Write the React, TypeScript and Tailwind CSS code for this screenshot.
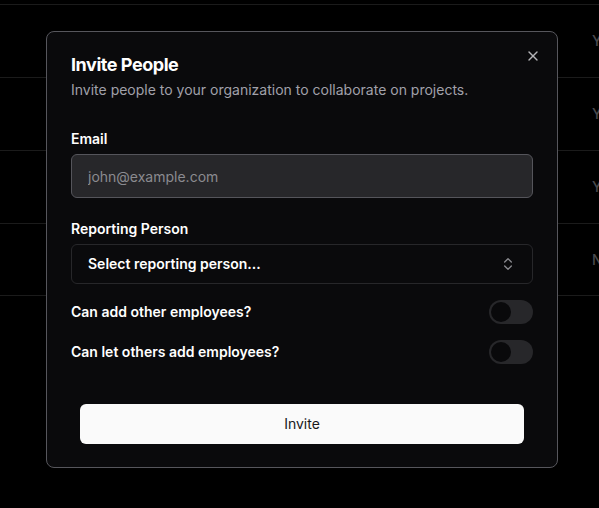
import { X, ChevronsUpDown } from "lucide-react";

/* ── Switch (off state) ── */
const Toggle = () => (
  <div className="flex h-6 w-11 shrink-0 items-center rounded-full border-2 border-transparent bg-[#27272a]">
    <div className="h-5 w-5 rounded-full bg-[#09090b]" />
  </div>
);

export default function App() {
  const rows = ["Yes", "Yes", "Yes", "No"];

  return (
    <div
      className="relative h-[508px] w-full overflow-hidden bg-black"
      style={{ fontFamily: "Inter, 'Noto Sans', sans-serif" }}
    >
      {/* ── Dimmed table behind the modal ── */}
      <div className="pt-1">
        {rows.map((r, i) => (
          <div
            key={i}
            className={`flex h-[73px] items-center justify-end border-t border-[#1b1b1b] ${
              i === rows.length - 1 ? "border-b" : ""
            }`}
          >
            <span className="w-[7px] overflow-hidden text-sm font-medium text-[#4a4a4e]">{r}</span>
          </div>
        ))}
      </div>

      {/* ── Invite dialog ── */}
      <div className="absolute left-[46px] top-[31px] w-[512px] rounded-lg border border-[#56565c] bg-[#0a0a0c] px-6 pt-6 pb-[23px] text-white">
        <button className="absolute right-4 top-4 text-[#b4b4b8]">
          <X size={16} strokeWidth={2} />
        </button>

        <div className="flex flex-col gap-1.5">
          <h2 className="text-lg leading-none font-bold tracking-tight">Invite People</h2>
          <p className="text-sm leading-5 text-[#a1a1aa]">
            Invite people to your organization to collaborate on projects.
          </p>
        </div>

        <div className="mt-8 flex flex-col gap-2">
          <label className="text-sm leading-none font-semibold">Email</label>
          <input
            placeholder="john@example.com"
            className="h-11 w-full rounded-md border border-[#55555b] bg-[#27272a] px-4 text-sm text-white placeholder:text-[#8b8b90] outline-none"
          />
        </div>

        <div className="mt-6 flex flex-col gap-2">
          <label className="text-sm leading-none font-semibold">Reporting Person</label>
          <div className="flex h-10 items-center justify-between rounded-md border border-[#27272a] px-4">
            <span className="text-sm font-semibold">Select reporting person...</span>
            <ChevronsUpDown size={16} className="text-[#8b8b90]" />
          </div>
        </div>

        <div className="mt-4 flex items-center justify-between">
          <span className="text-sm font-semibold">Can add other employees?</span>
          <Toggle />
        </div>
        <div className="mt-4 flex items-center justify-between">
          <span className="text-sm font-semibold">Can let others add employees?</span>
          <Toggle />
        </div>

        <div className="mx-[9px] mt-10">
          <button className="h-10 w-full rounded-md bg-[#fafafa] text-sm font-normal text-[#18181b]">
            Invite
          </button>
        </div>
      </div>
    </div>
  );
}
